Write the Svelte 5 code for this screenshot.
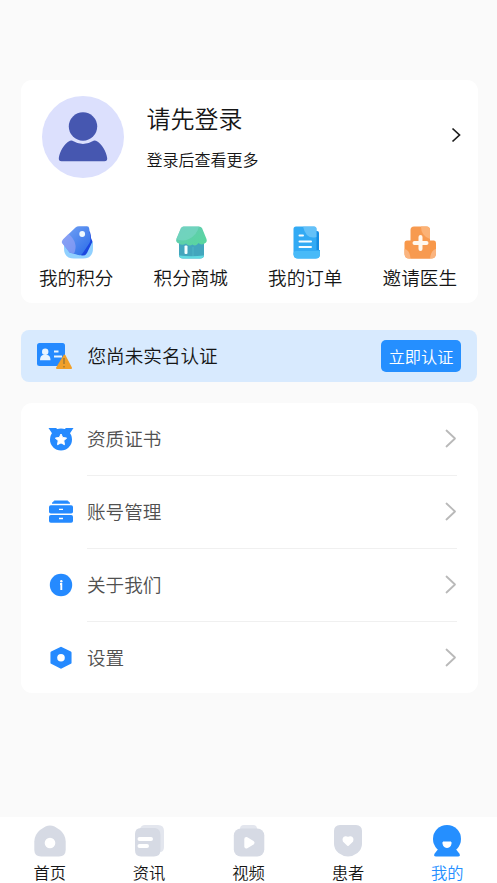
<script lang="ts">
  const shortcuts = [
    { icon: 'points', label: '我的积分' },
    { icon: 'shop', label: '积分商城' },
    { icon: 'order', label: '我的订单' },
    { icon: 'invite', label: '邀请医生' }
  ];

  const menus = [
    { icon: 'medal', label: '资质证书' },
    { icon: 'drawer', label: '账号管理' },
    { icon: 'info', label: '关于我们' },
    { icon: 'setting', label: '设置' }
  ];

  const tabs = [
    { icon: 'home', label: '首页' },
    { icon: 'news', label: '资讯' },
    { icon: 'video', label: '视频' },
    { icon: 'patient', label: '患者' },
    { icon: 'mine', label: '我的' }
  ];

  let active = $state('mine');
</script>

<div class="page">
  <section class="card profile">
    <div class="user">
      <svg class="avatar" viewBox="0 0 82 82">
        <circle cx="41" cy="41" r="41" fill="#dce0fd" />
        <circle cx="41" cy="30.5" r="14.2" fill="#4657b0" />
        <path d="M28 44.8Q30 44.3 31.5 45.2Q41 51 50.5 45.2Q52 44.3 54 44.8C60 48 64 55 65.2 62Q65.4 65.2 62.5 65.2H19.5Q16.6 65.2 16.8 62C18 55 22 48 28 44.8Z" fill="#4657b0" />
      </svg>
      <div class="user-text">
        <h2>请先登录</h2>
        <p>登录后查看更多</p>
      </div>
      <svg class="user-arrow" width="10" height="16" viewBox="0 0 10 16">
        <path d="M1.5 1.5L8.5 8L1.5 14.5" fill="none" stroke="#1c1c1c" stroke-width="1.7" />
      </svg>
    </div>

    <div class="shortcuts">
      {#each shortcuts as item}
        <button class="shortcut">
          <svg width="34" height="34" viewBox="0 0 34 34">
            {#if item.icon === 'points'}
              <defs>
                <linearGradient id="tag" x1="0" y1="0" x2="1" y2="1">
                  <stop offset="0" stop-color="#78a5f5" />
                  <stop offset="1" stop-color="#286be8" />
                </linearGradient>
              </defs>
              <path d="M4 17H33V23Q33 33.500 23 33.500H14Q4 33.500 4 23Z" fill="#90d0ff" />
              <path d="M27 4L30 7Q31 10 31 13L32.500 16.500L27 28Q25.500 31 22 30.500L9 27L24 13Z" fill="#1c48df" />
              <path d="M15.500 2.500Q17 1.300 19 1.300H27Q29 1.300 29.200 3.500L30.500 14Q30.700 16 29.500 18L22.500 28.500Q21 31 18.500 30L11 28Q9 27.500 8 25.500L2.500 18.500Q1.300 16.500 3 14.500Z" fill="url(#tag)" />
              <path d="M3 14.500L8.500 8.800Q19 18 14 28.800L11 28Q9 27.500 8 25.500L2.500 18.500Q1.300 16.500 3 14.500Z" fill="#9aa5f6" opacity=".65" />
              <circle cx="22.200" cy="9" r="2.900" fill="#eff9ff" />
            {:else if item.icon === 'shop'}
              <defs>
                <linearGradient id="roof" x1="0" y1="0" x2="1" y2="1">
                  <stop offset="0" stop-color="#63c8b7" />
                  <stop offset="1" stop-color="#58d89b" />
                </linearGradient>
              </defs>
              <path d="M5 15H30V30Q30 33.500 26 33.500H9Q5 33.500 5 30Z" fill="#43a6bd" />
              <path d="M5 30.500Q17 32 30 30.500Q29.500 33.500 26 33.500H9Q5.500 33.500 5 30.500Z" fill="#60dae1" />
              <path d="M9.500 1.500H25Q27 1.500 28 3L32.500 14Q33.500 17 30.500 18.500Q27 20.500 24.500 18Q22 22 18.500 19.500Q15 22 12 18.500Q8 21 5 18.500Q1 17 2.500 13.500L7 3Q8 1.500 9.500 1.500Z" fill="url(#roof)" />
              <path d="M9.500 1.500H25Q23 10 15 14Q9 17 2.500 14L7 3Q8 1.500 9.500 1.500Z" fill="#7ad5c6" opacity=".65" />
              <rect x="10.500" y="20.500" width="3" height="8.500" rx="1" fill="#f6ffff" />
              <path d="M19 22V31" stroke="#54bdca" stroke-width=".7" />
            {:else if item.icon === 'order'}
              <path d="M24 6H28Q30 6 30 8V27H24Z" fill="#168de2" />
              <path d="M7 1.500H25Q27.500 1.500 27.500 4V25H31V29Q31 33.500 26.500 33.500H9Q4.500 33.500 4.500 29V4Q4.500 1.500 7 1.500Z" fill="#32aaf4" />
              <path d="M7 26H31V29Q31 33.500 26.500 33.500H9Q5 33.500 4.500 29Q4.500 26 7 26Z" fill="#48baf8" />
              <path d="M14 1.500H25Q27.500 1.500 27.500 4V12Q17 15 14 1.500Z" fill="#76c8fa" opacity=".75" />
              <path d="M10.500 10.500H14M10.500 16.500H22M10.500 22H22" stroke="#f5fcff" stroke-width="2" stroke-linecap="round" />
            {:else}
              <path d="M4 15.500H31Q33 15.500 33 18V28Q33 33.500 28 33.500H6Q1.500 33.500 1.500 28V18Q1.500 15.500 4 15.500Z" fill="#f8984a" />
              <path d="M11 1.500H23.500Q27 1.500 27 5V33.500H7.500V5Q7.500 1.500 11 1.500Z" fill="#f79a50" />
              <path d="M18 1.500H23.500Q27 1.500 27 5V14Q18 11 18 1.500Z" fill="#fbb276" />
              <path d="M1.500 24Q7 25 7.500 33.500H6Q1.500 33.500 1.500 28ZM33 24Q28 25 27 33.500H28Q33 33.500 33 28Z" fill="#fab47f" />
              <path d="M17.500 12V24M11.500 18H23.500" stroke="#fff8ef" stroke-width="4" stroke-linecap="round" />
            {/if}
          </svg>
          <span>{item.label}</span>
        </button>
      {/each}
    </div>
  </section>

  <section class="verify">
    <svg width="36" height="28" viewBox="0 0 36 28">
      <rect x="0" y="1" width="28" height="23" rx="2.5" fill="#258aff" />
      <circle cx="8.2" cy="9.8" r="3.2" fill="#e9f4ff" />
      <path d="M3 18.3Q3 13 7 12.7H9.500Q13.500 13 13.500 18.300Z" fill="#e9f4ff" />
      <path d="M17 9.5H21.5M17 14.5H25" stroke="#e9f4ff" stroke-width="1.8" />
      <path d="M27.500 13.500L34 26H20Z" fill="#f0a02b" stroke="#f0a02b" stroke-width="2" stroke-linejoin="round" />
      <path d="M27 16V22M27 24V25.5" stroke="#8d7035" stroke-width="1.2" />
    </svg>
    <span class="verify-text">您尚未实名认证</span>
    <button class="verify-btn">立即认证</button>
  </section>

  <section class="card menu">
    {#each menus as item}
      <button class="menu-row">
        <svg class="menu-icon" width="26" height="26" viewBox="0 0 26 26">
          {#if item.icon === 'medal'}
            <path d="M.5 2H8L10 3.500H16L18 2H25.500L21.500 8H4.500Z" fill="#258aff" />
            <circle cx="13" cy="13.500" r="11" fill="#258aff" />
            <path d="M13 8L14.700 11.500L18.600 12L15.800 14.800L16.500 18.700L13 16.900L9.500 18.700L10.200 14.800L7.400 12L11.300 11.500Z" fill="#fff" stroke="#fff" stroke-linejoin="round" />
          {:else if item.icon === 'drawer'}
            <path d="M6.500 2H19.500L21.800 4.200H4.200Z" fill="#258aff" stroke="#258aff" stroke-linejoin="round" />
            <rect x="1" y="6.200" width="24" height="8.300" rx="1.800" fill="#258aff" />
            <rect x="1" y="16" width="24" height="7.800" rx="1.800" fill="#258aff" />
            <path d="M11 10.300H15M11 19.500H15" stroke="#fff" stroke-width="1.300" />
          {:else if item.icon === 'info'}
            <circle cx="13" cy="13" r="11.200" fill="#258aff" />
            <path d="M12 12H13.300V18" fill="none" stroke="#fff" stroke-width="1.900" />
            <circle cx="13.300" cy="9.300" r="1.200" fill="#fff" />
          {:else}
            <path d="M13 3L22.300 7.700V17.700L13 22.500L3.700 17.700V7.700Z" fill="#258aff" stroke="#258aff" stroke-width="2.500" stroke-linejoin="round" />
            <circle cx="13" cy="12.700" r="3.800" fill="#fff" />
          {/if}
        </svg>
        <span class="menu-body">
          <span>{item.label}</span>
          <svg width="12" height="19" viewBox="0 0 12 19">
            <path d="M1.500 1.500L10 9.500L1.500 17.500" fill="none" stroke="#b9b9b9" stroke-width="1.800" stroke-linecap="round" stroke-linejoin="round" />
          </svg>
        </span>
      </button>
    {/each}
  </section>

  <nav class="tabbar">
    {#each tabs as tab}
      <button class="tab" class:active={active === tab.icon} onclick={() => (active = tab.icon)}>
        <svg width="34" height="34" viewBox="0 0 34 34" fill="currentColor">
          {#if tab.icon === 'home'}
            <path d="M12.500 2.500Q17 .5 21.500 2.500L27 6Q32.500 10.500 32.700 17.500V26Q32.500 32.500 26 32.500H8Q1.500 32.500 1.300 26V17.500Q1.500 10.500 7 6Z" />
            <circle cx="17" cy="19" r="5.300" fill="#fff" />
          {:else if tab.icon === 'news'}
            <path d="M8 5Q9 1 13 1H26Q32 1 32 7V23Q32 28 28 28Z" fill="#e3e6ee" />
            <path d="M9 4H23Q28.500 5 28.500 11V26Q28.500 32.500 22 32.500H9Q3 32.500 3 26V10Q3 4 9 4Z" />
            <path d="M7.500 15H19M7.500 22H15" stroke="#fff" stroke-width="4" stroke-linecap="round" />
          {:else if tab.icon === 'video'}
            <rect x="8" y="1" width="17" height="12" rx="4" fill="#e3e6ee" />
            <rect x="1.800" y="4.500" width="30.500" height="28" rx="7" />
            <path d="M14.300 15L20.500 18.700L14.300 22.500Z" fill="#fff" stroke="#fff" stroke-width="4" stroke-linejoin="round" />
          {:else if tab.icon === 'patient'}
            <path d="M9 1H25Q31 1.500 31 7V20Q31 25 26.500 29Q17 36 7.500 29Q3 25 3 20V7Q3 1.500 9 1Z" />
            <path d="M17 21L12.800 17Q11.800 13.500 14.500 13.300Q16 13.300 17 14Q18 13.300 19.500 13.300Q22.200 13.500 21.200 17Z" fill="#fff" stroke="#fff" stroke-width="2" stroke-linejoin="round" />
          {:else}
            <circle cx="17" cy="15" r="14" />
            <path d="M9 24H25L29.300 29.500Q31 32.500 28 32.500H6Q3 32.500 4.700 29.500Z" />
            <path d="M13 18H21V20Q20.500 23.500 17 23.500Q13.500 23.500 13 20Z" fill="#fff" stroke="#fff" stroke-linejoin="round" />
          {/if}
        </svg>
        <span>{tab.label}</span>
      </button>
    {/each}
  </nav>
</div>

<style>
  :global(body) {
    margin: 0;
    background: #fafafa;
  }

  .page {
    box-sizing: border-box;
    width: 100%;
    height: 883px;
    padding-top: 79.5px;
    display: flex;
    flex-direction: column;
    overflow: hidden;
    background: #fafafa;
    color: #161616;
    font-family: 'Noto Sans CJK SC', sans-serif;
    font-weight: 350;
  }

  svg {
    display: block;
    flex: none;
  }

  button {
    padding: 0;
    border: none;
    background: none;
    color: inherit;
    font: inherit;
    cursor: pointer;
  }

  .card {
    margin: 0 19.5px 0 20.5px;
    background: #fff;
    border-radius: 11px;
  }

  .profile {
    height: 223px;
  }

  .user {
    display: flex;
    align-items: center;
    padding: 16px 17px 0 21.5px;
  }

  .avatar {
    width: 82px;
    height: 82px;
  }

  .user-text {
    flex: 1;
    margin-left: 22.5px;
  }

  .user-arrow {
    margin-bottom: 3px;
  }

  h2 {
    margin: -2px 0 0;
    font-size: 24px;
    line-height: 36px;
    font-weight: inherit;
  }

  p {
    margin: 11px 0 0;
    font-size: 16px;
    line-height: 24px;
  }

  .shortcuts {
    display: flex;
    justify-content: space-between;
    padding: 47px 20.5px 0 18.5px;
  }

  .shortcut {
    display: flex;
    flex-direction: column;
    align-items: center;
    font-size: 18.6px;
    line-height: 28px;
  }

  .shortcut svg {
    margin-left: 1px;
  }

  .shortcut span {
    margin-top: 4px;
  }

  .verify {
    display: flex;
    align-items: center;
    height: 52.5px;
    box-sizing: border-box;
    margin: 27px 20px 20.5px 20.5px;
    padding: 0 16px 0 16.5px;
    border-radius: 8px;
    background: #d8eafe;
  }

  .verify-text {
    flex: 1;
    margin: -2px 0 0 14.5px;
    font-size: 18.6px;
  }

  .verify-btn {
    width: 80px;
    height: 32px;
    border-radius: 5px;
    background: #258fff;
    color: #fff;
    font-size: 16.2px;
    line-height: 32px;
  }

  .menu {
    height: 290.5px;
    display: flex;
    flex-direction: column;
  }

  .menu-row {
    flex: 1 0 73px;
    display: flex;
    align-items: center;
    padding: 0 21px 0 27px;
    color: #505050;
    font-size: 18.6px;
  }

  .menu-body {
    flex: 1;
    display: flex;
    align-items: center;
    justify-content: space-between;
    align-self: stretch;
    margin-left: 13.5px;
    border-bottom: 1px solid #f0f0f0;
  }

  .menu-body span {
    margin-top: -2px;
  }

  .menu-row:last-child .menu-body {
    border-bottom-color: transparent;
  }

  .tabbar {
    display: flex;
    height: 66px;
    margin-top: auto;
    background: #fff;
  }

  .tab {
    flex: 1;
    display: flex;
    flex-direction: column;
    align-items: center;
    padding-top: 7px;
    color: #d6dae4;
    font-size: 16.3px;
    line-height: 24px;
  }

  .tab span {
    margin-top: 2px;
    color: #161616;
  }

  .tab.active,
  .tab.active span {
    color: #258fff;
  }
</style>
